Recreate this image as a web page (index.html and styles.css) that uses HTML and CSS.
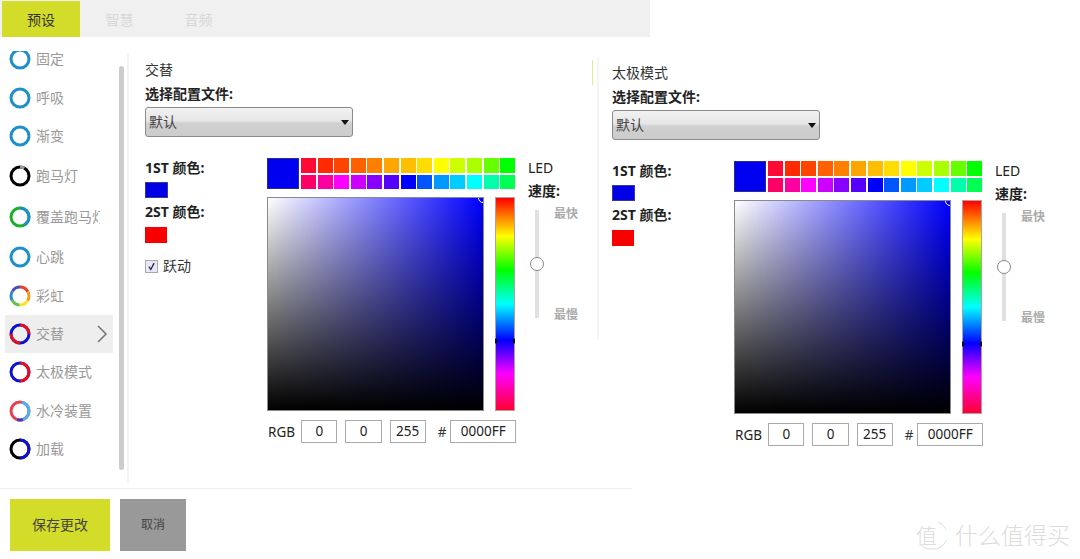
FILE: index.html
```html
<!DOCTYPE html>
<html lang="zh-CN">
<head>
    <meta charset="UTF-8">
    <title>预设</title>
    <link rel="stylesheet" href="styles.css">
</head>
<body>
<div class="tabs">
    <div class="tab active">预设</div>
    <div class="tab">智慧</div>
    <div class="tab">音频</div>
</div>
<div class="main">
    <div class="sidebar">
        <div class="list">
            <div class="item">
                <svg class="ring ring-cut" viewBox="0 0 22 22"><circle cx="11" cy="11" r="9" stroke="#1e8fc8"/></svg>
                <span class="item-name">固定</span>
            </div>
            <div class="item">
                <svg class="ring" viewBox="0 0 22 22"><circle cx="11" cy="11" r="9" stroke="#1e8fc8"/></svg>
                <span class="item-name">呼吸</span>
            </div>
            <div class="item">
                <svg class="ring" viewBox="0 0 22 22"><circle cx="11" cy="11" r="9" stroke="#1e8fc8"/></svg>
                <span class="item-name">渐变</span>
            </div>
            <div class="item item-gap">
                <svg class="ring" viewBox="0 0 22 22">
                    <circle cx="11" cy="11" r="9" stroke="#000"/>
                    <circle cx="11" cy="11" r="9" stroke="#9a9a9a" pathLength="100" stroke-dasharray="8 92"/>
                </svg>
                <span class="item-name">跑马灯</span>
            </div>
            <div class="item item-gap">
                <svg class="ring" viewBox="0 0 22 22">
                    <circle cx="11" cy="11" r="9" stroke="#1ab02c"/>
                    <circle cx="11" cy="11" r="9" stroke="#1e8fc8" pathLength="100" stroke-dasharray="42 58"/>
                </svg>
                <span class="item-name">覆盖跑马灯</span>
            </div>
            <div class="item item-gap">
                <svg class="ring" viewBox="0 0 22 22"><circle cx="11" cy="11" r="9" stroke="#1e8fc8"/></svg>
                <span class="item-name">心跳</span>
            </div>
            <div class="item">
                <svg class="ring" viewBox="0 0 22 22">
                    <circle cx="11" cy="11" r="9" stroke="#e8432c" pathLength="100" stroke-dasharray="17 83"/>
                    <circle cx="11" cy="11" r="9" stroke="#f59a23" pathLength="100" stroke-dasharray="17 83" stroke-dashoffset="-17"/>
                    <circle cx="11" cy="11" r="9" stroke="#f7e32b" pathLength="100" stroke-dasharray="17 83" stroke-dashoffset="-34"/>
                    <circle cx="11" cy="11" r="9" stroke="#6cc04a" pathLength="100" stroke-dasharray="16 84" stroke-dashoffset="-51"/>
                    <circle cx="11" cy="11" r="9" stroke="#2a8fc4" pathLength="100" stroke-dasharray="17 83" stroke-dashoffset="-67"/>
                    <circle cx="11" cy="11" r="9" stroke="#4a4fb5" pathLength="100" stroke-dasharray="16 84" stroke-dashoffset="-84"/>
                </svg>
                <span class="item-name">彩虹</span>
            </div>
            <div class="item selected">
                <svg class="ring" viewBox="0 0 22 22">
                    <circle cx="11" cy="11" r="9" stroke="#1010d0"/>
                    <circle cx="11" cy="11" r="9" stroke="#e01020" pathLength="100" stroke-dasharray="25 25"/>
                </svg>
                <span class="item-name">交替</span>
                <svg class="chevron" viewBox="0 0 12 18"><polyline points="2,1 10,9 2,17"/></svg>
            </div>
            <div class="item">
                <svg class="ring" viewBox="0 0 22 22">
                    <circle cx="11" cy="11" r="9" stroke="#1010d0"/>
                    <circle cx="11" cy="11" r="9" stroke="#e01020" pathLength="100" stroke-dasharray="50 50"/>
                </svg>
                <span class="item-name">太极模式</span>
            </div>
            <div class="item">
                <svg class="ring" viewBox="0 0 22 22">
                    <circle cx="11" cy="11" r="9" stroke="#e8404e"/>
                    <circle cx="11" cy="11" r="9" stroke="#4fb0ee" pathLength="100" stroke-dasharray="42 58" stroke-dashoffset="-3"/>
                    <circle cx="11" cy="11" r="9" stroke="#3a3ad0" pathLength="100" stroke-dasharray="10 90" stroke-dashoffset="-45"/>
                </svg>
                <span class="item-name">水冷装置</span>
            </div>
            <div class="item">
                <svg class="ring" viewBox="0 0 22 22">
                    <circle cx="11" cy="11" r="9" stroke="#000"/>
                    <circle cx="11" cy="11" r="9" stroke="#1010d0" pathLength="100" stroke-dasharray="50 50"/>
                </svg>
                <span class="item-name">加载</span>
            </div>
        </div>
        <div class="scrollbar"></div>
    </div>

    <div class="pane">
        <div class="pane-title">交替</div>
        <div class="field-label">选择配置文件:</div>
        <div class="select">默认</div>
        <div class="columns">
            <div class="colors">
                <div class="field-label">1ST 颜色:</div>
                <div class="color blue"></div>
                <div class="field-label">2ST 颜色:</div>
                <div class="color red"></div>
                <div class="check">
                    <span class="checkbox"><svg viewBox="0 0 12 12"><polyline points="2.5,6 5,10 9.5,1.5"/></svg></span>
                    跃动
                </div>
            </div>
            <div class="picker">
                <div class="picker-top">
                    <div class="current"></div>
                    <div class="swatches">
                        <span></span><span></span><span></span><span></span><span></span><span></span><span></span><span></span><span></span><span></span><span></span><span></span><span></span>
                        <span></span><span></span><span></span><span></span><span></span><span></span><span></span><span></span><span></span><span></span><span></span><span></span><span></span>
                    </div>
                </div>
                <div class="picker-mid">
                    <div class="sat"><div class="sat-mark"></div></div>
                    <div class="hue"><div class="hue-mark"></div></div>
                </div>
                <div class="rgb">
                    <span class="rgb-label">RGB</span>
                    <span class="num">0</span>
                    <span class="num">0</span>
                    <span class="num">255</span>
                    <span class="hash">#</span>
                    <span class="num hex">0000FF</span>
                </div>
            </div>
            <div class="speed">
                <div class="led">LED</div>
                <div class="field-label">速度:</div>
                <div class="slider">
                    <div class="track"><div class="thumb"></div></div>
                    <div class="speed-ends"><span>最快</span><span>最慢</span></div>
                </div>
            </div>
        </div>
    </div>

    <div class="pane side">
        <div class="pane-title">太极模式</div>
        <div class="field-label">选择配置文件:</div>
        <div class="select">默认</div>
        <div class="columns">
            <div class="colors">
                <div class="field-label">1ST 颜色:</div>
                <div class="color blue"></div>
                <div class="field-label">2ST 颜色:</div>
                <div class="color red"></div>
            </div>
            <div class="picker">
                <div class="picker-top">
                    <div class="current"></div>
                    <div class="swatches">
                        <span></span><span></span><span></span><span></span><span></span><span></span><span></span><span></span><span></span><span></span><span></span><span></span><span></span>
                        <span></span><span></span><span></span><span></span><span></span><span></span><span></span><span></span><span></span><span></span><span></span><span></span><span></span>
                    </div>
                </div>
                <div class="picker-mid">
                    <div class="sat"><div class="sat-mark"></div></div>
                    <div class="hue"><div class="hue-mark"></div></div>
                </div>
                <div class="rgb">
                    <span class="rgb-label">RGB</span>
                    <span class="num">0</span>
                    <span class="num">0</span>
                    <span class="num">255</span>
                    <span class="hash">#</span>
                    <span class="num hex">0000FF</span>
                </div>
            </div>
            <div class="speed">
                <div class="led">LED</div>
                <div class="field-label">速度:</div>
                <div class="slider">
                    <div class="track"><div class="thumb"></div></div>
                    <div class="speed-ends"><span>最快</span><span>最慢</span></div>
                </div>
            </div>
        </div>
    </div>
</div>
<div class="footer">
    <button class="btn save">保存更改</button>
    <button class="btn cancel">取消</button>
</div>
<div class="watermark">
    <span class="wm-badge">
        <svg viewBox="0 0 30 30"><path d="M22 2 A14 14 0 0 1 15 29 A14 14 0 0 1 4 24"/></svg>
        <span class="wm-char">值</span>
    </span>
    <span>什么值得买</span>
</div>
</body>
</html>
```
FILE: styles.css
```css
* {
    box-sizing: border-box;
    margin: 0;
    padding: 0;
}

html, body {
    height: 100%;
}

body {
    background-color: #fff;
    font-family: "Noto Sans", "Noto Sans CJK SC", sans-serif;
    font-size: 14px;
    color: #222;
    overflow: hidden;
    position: relative;
}

/* tabs */
.tabs {
    display: flex;
    width: 650px;
    height: 37px;
    padding: 1px 0 0 2px;
    background-color: #f0f0f0;
}

.tab {
    width: 79px;
    display: flex;
    align-items: center;
    justify-content: center;
    color: #d8d8d8;
}

.tab.active {
    width: 78px;
    background-color: #d4dc2a;
    color: #333;
}

.main {
    display: flex;
    height: 451px;
}

/* left list */
.sidebar {
    display: flex;
    width: 129px;
    height: 429px;
    margin-top: 16px;
    padding-left: 5px;
    border-right: 2px solid #f3f3f3;
    flex-shrink: 0;
}

.list {
    width: 108px;
    margin-top: -13px;
}

.item {
    display: flex;
    align-items: center;
    height: 38.4px;
    padding-left: 4px;
    color: #999;
}

.item-gap {
    margin-top: 2px;
}

.item.selected {
    background-color: #eee;
}

.ring {
    width: 22px;
    height: 22px;
    margin-right: 5px;
    flex-shrink: 0;
    transform: rotate(-90deg);
}

/* first row is scrolled under the top of the list */
.ring-cut {
    clip-path: inset(0 3px 0 0);
}

.ring circle {
    fill: none;
    stroke-width: 3;
}

.item-name {
    width: 64px;
    line-height: 20px;
    overflow: hidden;
    white-space: nowrap;
}

.chevron {
    width: 12px;
    height: 18px;
    margin-left: -4px;
    flex-shrink: 0;
}

.chevron polyline {
    fill: none;
    stroke: #777;
    stroke-width: 1.6;
}

.scrollbar {
    width: 5px;
    height: 404px;
    margin: 13px 0 0 6px;
    background-color: #ccc;
    border-radius: 3px;
}

/* settings pane */
.pane {
    width: 468px;
    padding: 23px 0 0 16px;
    flex-shrink: 0;
}

.pane.side {
    position: relative;
    width: 483px;
    padding: 26px 0 0 15px;
}

.pane.side::before {
    content: "";
    position: absolute;
    left: 0;
    top: 20px;
    width: 2px;
    height: 283px;
    background-color: #f5f5f5;
}

.pane.side::after {
    content: "";
    position: absolute;
    left: -5px;
    top: 23px;
    width: 1px;
    height: 25px;
    background-color: #e6e88a;
}

.pane-title {
    height: 20px;
    line-height: 20px;
    color: #333;
}

.field-label {
    height: 20px;
    line-height: 20px;
    font-weight: 700;
    color: #222;
    white-space: nowrap;
}

.pane-title + .field-label {
    margin-top: 4px;
}

.select {
    position: relative;
    width: 208px;
    height: 30px;
    margin-top: 3px;
    padding-left: 3px;
    line-height: 27px;
    color: #444;
    border: 1px solid #8a8a8a;
    border-radius: 3px;
    background: linear-gradient(#f2f2f2, #e6e6e6 45%, #d0d0d0 55%, #cccccc);
}

.select::after {
    content: "";
    position: absolute;
    right: 3px;
    top: 12px;
    border-left: 4px solid transparent;
    border-right: 4px solid transparent;
    border-top: 5px solid #111;
}

.columns {
    display: flex;
    margin-top: 21px;
}

.colors {
    width: 122px;
    flex-shrink: 0;
}

.color {
    height: 16px;
    margin: 4px 0;
}

.color.blue {
    width: 23px;
    background-color: #0000e6;
    border: 1px solid #3a3a90;
}

.color.red {
    width: 22px;
    margin-top: 5px;
    background-color: #f80000;
}

.check {
    display: flex;
    align-items: center;
    gap: 5px;
    margin-top: 13px;
    color: #333;
    line-height: 20px;
}

.checkbox {
    width: 13px;
    height: 13px;
    padding: 1px;
    background-color: #e8e8f2;
    border: 1px solid #a8a8b0;
}

.checkbox svg {
    display: block;
    width: 100%;
    height: 100%;
}

.checkbox polyline {
    fill: none;
    stroke: #23235f;
    stroke-width: 1.8;
}

/* colour picker */
.picker {
    width: 249px;
    flex-shrink: 0;
}

.picker-top {
    display: flex;
    gap: 2px;
}

.current {
    width: 32px;
    height: 31px;
    background-color: #0000f0;
    border: 1px solid #2c2c80;
}

.swatches {
    display: grid;
    grid-template-columns: repeat(13, 15px);
    grid-template-rows: 14.5px 14.5px;
    column-gap: 1.6px;
    row-gap: 2px;
}

.swatches span:nth-child(1) { background-color: #ff0a33; }
.swatches span:nth-child(2) { background-color: #ff2a00; }
.swatches span:nth-child(3) { background-color: #ff4400; }
.swatches span:nth-child(4) { background-color: #ff6000; }
.swatches span:nth-child(5) { background-color: #ff8000; }
.swatches span:nth-child(6) { background-color: #ffa500; }
.swatches span:nth-child(7) { background-color: #ffbf00; }
.swatches span:nth-child(8) { background-color: #ffdd00; }
.swatches span:nth-child(9) { background-color: #ffff00; }
.swatches span:nth-child(10) { background-color: #ccff00; }
.swatches span:nth-child(11) { background-color: #aaff00; }
.swatches span:nth-child(12) { background-color: #66ff00; }
.swatches span:nth-child(13) { background-color: #00ff00; }
.swatches span:nth-child(14) { background-color: #ff0066; }
.swatches span:nth-child(15) { background-color: #ff00a0; }
.swatches span:nth-child(16) { background-color: #ff00ff; }
.swatches span:nth-child(17) { background-color: #cc00ff; }
.swatches span:nth-child(18) { background-color: #8800ff; }
.swatches span:nth-child(19) { background-color: #5500ff; }
.swatches span:nth-child(20) { background-color: #0000ff; }
.swatches span:nth-child(21) { background-color: #0055ff; }
.swatches span:nth-child(22) { background-color: #0099ff; }
.swatches span:nth-child(23) { background-color: #00ccff; }
.swatches span:nth-child(24) { background-color: #00ffff; }
.swatches span:nth-child(25) { background-color: #00ffaa; }
.swatches span:nth-child(26) { background-color: #00ff55; }

.picker-mid {
    display: flex;
    gap: 11px;
    margin-top: 8px;
}

.sat {
    position: relative;
    width: 217px;
    height: 214px;
    overflow: hidden;
    border: 1px solid #8a8a8a;
    background: linear-gradient(to top, #000, rgba(0, 0, 0, 0)), linear-gradient(to right, #fff, #0000ff);
}

.sat-mark {
    position: absolute;
    right: -5px;
    top: -5px;
    width: 10px;
    height: 10px;
    border: 1px solid #fff;
    border-radius: 50%;
}

.hue {
    position: relative;
    width: 20px;
    height: 214px;
    border: 1px solid #b0a0a0;
    background: linear-gradient(#ff0000, #ffff00 18%, #00ff00 34%, #00ffff 50%, #0000ff 67%, #ff00ff 83%, #ff0033);
}

.hue-mark {
    position: absolute;
    left: -1px;
    right: -1px;
    top: 139px;
    height: 8px;
    background:
        radial-gradient(circle at 0 50%, #111 2px, transparent 3px),
        radial-gradient(circle at 100% 50%, #111 2px, transparent 3px);
}

.rgb {
    display: flex;
    align-items: center;
    margin-top: 9px;
    height: 23px;
    font-size: 13.5px;
    color: #222;
}

.rgb-label {
    width: 35px;
    padding-left: 1px;
}

.num {
    width: 37px;
    height: 23px;
    margin-right: 8px;
    line-height: 21px;
    text-align: center;
    border: 1px solid #aaa;
}

.hash {
    width: 13px;
    margin-left: 4px;
    color: #333;
}

.num.hex {
    width: 67px;
    margin-right: 0;
}

/* speed column */
.speed {
    margin-left: 12px;
    width: 66px;
    flex-shrink: 0;
}

.led {
    height: 20px;
    line-height: 20px;
    margin-bottom: 3px;
}

.slider {
    display: flex;
    margin-top: 3px;
}

.track {
    position: relative;
    width: 4px;
    height: 108px;
    margin: 6px 0 0 7px;
    background-color: #e0e0e0;
}

.thumb {
    position: absolute;
    left: -5px;
    top: 47px;
    width: 14px;
    height: 14px;
    background-color: #fff;
    border: 1px solid #888;
    border-radius: 50%;
}

.speed-ends {
    display: flex;
    flex-direction: column;
    justify-content: space-between;
    height: 119px;
    margin-left: 15px;
    font-size: 12px;
    font-weight: 700;
    color: #aaa;
}

/* footer */
.footer {
    display: flex;
    gap: 10px;
    width: 632px;
    padding: 10px 0 0 10px;
    border-top: 1px solid #eee;
}

.btn {
    height: 52px;
    padding-bottom: 2px;
    border: none;
    font-family: inherit;
    color: #444;
}

.save {
    width: 100px;
    font-size: 14px;
    background-color: #d4dc2a;
}

.cancel {
    width: 66px;
    font-size: 12px;
    background-color: #999;
}

/* watermark sits over the page corner */
.watermark {
    position: absolute;
    right: 10px;
    bottom: 9px;
    display: flex;
    align-items: center;
    gap: 9px;
    font-size: 23px;
    font-weight: 300;
    line-height: 30px;
    color: #dcdcdc;
}

.wm-badge {
    position: relative;
    width: 30px;
    height: 30px;
    display: flex;
    align-items: center;
}

.wm-badge svg {
    position: absolute;
    inset: 0;
}

.wm-badge path {
    fill: none;
    stroke: #ddd;
    stroke-width: 1;
}

.wm-char {
    font-size: 21px;
}
```
